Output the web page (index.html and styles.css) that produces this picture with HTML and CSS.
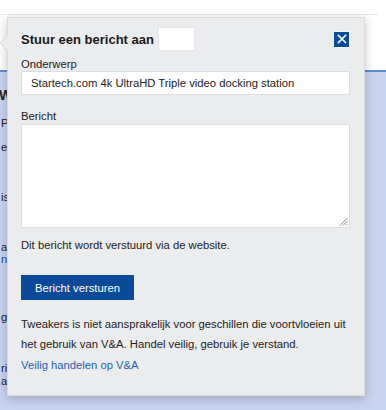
FILE: index.html
```html
<!DOCTYPE html>
<html lang="nl">
<head>
<meta charset="utf-8">
<title>Stuur een bericht</title>
<link rel="stylesheet" href="styles.css">
</head>
<body>
<div class="page">
  <div class="topbar"></div>
  <div class="header-space"></div>
  <div class="content">
    <div class="col">
      <p class="ln h">W</p>
      <p class="ln l2">P</p>
      <p class="ln l3">e</p>
      <p class="ln l4">is</p>
      <p class="ln l4">a</p>
      <p class="ln l6 link">n.</p>
      <p class="ln l7">gi</p>
      <p class="ln l8">ri</p>
      <p class="ln l9">ar</p>
    </div>
  </div>

  <div class="popup">
    <span class="arrow"></span>
    <div class="pop-head">
      <h2 class="pop-title">Stuur een bericht aan</h2>
      <span class="name-box"></span>
      <button class="close" aria-label="Sluiten">
        <svg width="10" height="10" viewBox="0 0 10 10"><path d="M1.5 1.5 L8.5 8.5 M8.5 1.5 L1.5 8.5" stroke="#fff" stroke-width="1.6" stroke-linecap="square"/></svg>
      </button>
    </div>
    <label class="lbl first">Onderwerp</label>
    <div class="field">Startech.com 4k UltraHD Triple video docking station</div>
    <label class="lbl second">Bericht</label>
    <div class="area">
      <svg class="grip" width="9" height="9" viewBox="0 0 9 9"><path d="M8.5 1 L1 8.5 M8.5 4 L4 8.5 M8.5 7 L7 8.5" stroke="#888" stroke-width="1"/></svg>
    </div>
    <p class="note">Dit bericht wordt verstuurd via de website.</p>
    <button class="send">Bericht versturen</button>
    <p class="disc">Tweakers is niet aansprakelijk voor geschillen die voortvloeien uit het gebruik van V&amp;A. Handel veilig, gebruik je verstand.</p>
    <a class="safe" href="#">Veilig handelen op V&amp;A</a>
  </div>
</div>
</body>
</html>
```
FILE: styles.css
```css
* { box-sizing: border-box; }
html, body { margin: 0; padding: 0; }
body {
  width: 386px;
  height: 410px;
  overflow: hidden;
  font-family: "Liberation Sans", Arial, sans-serif;
  color: #222;
  background: #fff;
}
.page { position: relative; width: 386px; height: 410px; }
.topbar { height: 15px; border-bottom: 1px solid #e6e6e6; margin-right: 8px; }
.header-space { height: 55px; }
.content {
  height: 340px;
  background: #c8d5f1;
  border-top: 2px solid #5b8bd8;
}
.col { padding: 15px 0 0 1px; font-size: 11.25px; }
.ln { margin: 0; line-height: 13px; white-space: nowrap; }
.ln.h { font-weight: bold; font-size: 14px; line-height: 16px; margin-left: -2px; }
.ln.l2 { margin-top: 13.5px; }
.ln.l3 { margin-top: 11px; }
.ln.l4 { margin-top: 37px; }
.ln.l6 { margin-top: -1px; }
.ln.l7 { margin-top: 45px; }
.ln.l8 { margin-top: 38px; }
.ln.l9 { margin-top: 0; }
.ln.link { color: #1b4f96; }

.popup {
  position: absolute;
  left: 7px;
  top: 17px;
  width: 358px;
  height: 379px;
  background: #ebecee;
  border: 1px solid #dadbdd;
  box-shadow: 0 3px 10px rgba(0, 0, 0, 0.22);
  padding: 9px 14px 0 13px;
}
.arrow {
  position: absolute;
  left: -8px;
  top: 16px;
  width: 0; height: 0;
  border-top: 9px solid transparent;
  border-bottom: 9px solid transparent;
  border-right: 8px solid #d6d7da;
}
.arrow::after {
  content: "";
  position: absolute;
  left: 1px;
  top: -8px;
  border-top: 8px solid transparent;
  border-bottom: 8px solid transparent;
  border-right: 7px solid #ebecee;
}
.pop-head {
  display: flex;
  align-items: center;
  height: 24px;
}
.pop-title {
  margin: 0;
  font-size: 13px;
  font-weight: bold;
  line-height: 20px;
  color: #1a1a1a;
  position: relative;
  top: 1px;
}
.name-box {
  width: 37px;
  height: 24px;
  margin-left: 4px;
  background: #fff;
  border: 1px solid #e4e6ea;
}
.close {
  margin-left: auto;
  width: 17px;
  height: 17px;
  padding: 0;
  border: 1px solid #f4f5f7;
  background: #0b4a99;
  display: flex;
  align-items: center;
  justify-content: center;
}
.lbl { display: block; font-size: 11.25px; line-height: 14px; color: #222; }
.lbl.first { margin-top: 6px; }
.lbl.second { margin-top: 14px; }
.field {
  margin-top: 0;
  height: 24px;
  background: #fff;
  border: 1px solid #dcdde0;
  padding-left: 9px;
  font-size: 11.25px;
  line-height: 22px;
  color: #222;
  white-space: nowrap;
}
.area {
  position: relative;
  margin-top: 1px;
  height: 104px;
  background: #fff;
  border: 1px solid #dcdde0;
}
.grip { position: absolute; right: 1px; bottom: 1px; }
.note { margin: 7px 0 0; font-size: 11.25px; line-height: 20px; }
.send {
  display: block;
  margin-top: 20px;
  height: 25px;
  width: 113px;
  padding: 0;
  border: 0;
  background: #0b4a99;
  color: #fff;
  font-family: inherit;
  font-size: 11.25px;
}
.disc { margin: 14px 0 0; font-size: 11.25px; line-height: 20px; }
.safe { display: block; margin-top: 1px; font-size: 11.25px; line-height: 20px; color: #1f62b0; text-decoration: none; }
```
